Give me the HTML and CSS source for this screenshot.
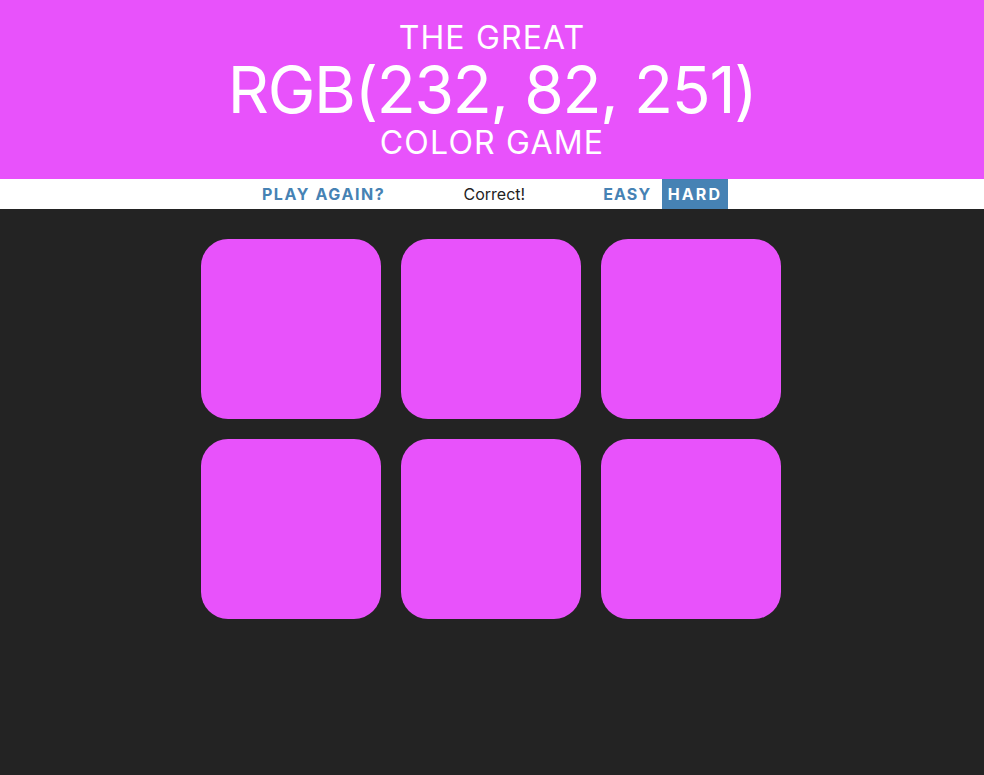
FILE: index.html
```html
<!DOCTYPE html>
<html>
<head>
<meta charset="utf-8">
<title>Color Game</title>
<link rel="stylesheet" href="styles.css">
</head>
<body>
<h1 class="title">
  <span class="title-line title-top">The Great</span>
  <span class="title-line color-display">RGB(232, 82, 251)</span>
  <span class="title-line title-bottom">Color Game</span>
</h1>
<div class="stripe">
  <button class="btn btn-reset">Play Again?</button>
  <span class="message">Correct!</span>
  <button class="btn btn-mode btn-easy">Easy</button>
  <button class="btn btn-mode btn-hard selected">Hard</button>
</div>
<div class="container">
  <div class="square"></div>
  <div class="square"></div>
  <div class="square"></div>
  <div class="square"></div>
  <div class="square"></div>
  <div class="square"></div>
</div>
</body>
</html>
```
FILE: styles.css
```css
body {
  margin: 0;
  background: #232323;
  font-family: Inter, "DejaVu Sans", sans-serif;
}

.title {
  margin: 0;
  padding: 20px 0 19px;
  height: 140px;
  background: rgb(232, 82, 251);
  color: #fff;
  text-align: center;
  text-transform: uppercase;
  font-weight: normal;
  font-size: 32px;
}

.title-line {
  display: block;
}

.title-top {
  height: 35px;
  line-height: 35px;
  letter-spacing: 1.15px;
}

.color-display {
  height: 70px;
  line-height: 70px;
  font-size: 64px;
  letter-spacing: -1.3px;
}

.title-bottom {
  height: 35px;
  line-height: 35px;
  letter-spacing: 1.2px;
}

.stripe {
  height: 30px;
  background: #fff;
  text-align: center;
  color: #232323;
  font-size: 16px;
}

.btn {
  border: none;
  background: none;
  padding: 0 6px;
  margin: 0;
  height: 100%;
  font-family: inherit;
  font-size: inherit;
  font-weight: 700;
  letter-spacing: 1.6px;
  text-transform: uppercase;
  color: steelblue;
  vertical-align: top;
  cursor: pointer;
}

.btn-easy {
  letter-spacing: 1.1px;
}

.btn-hard {
  letter-spacing: 2.1px;
}

.message {
  display: inline-block;
  width: 20%;
  line-height: 30px;
  vertical-align: top;
}

.btn.selected {
  background: steelblue;
  color: #fff;
}

.container {
  width: 580px;
  margin: 30px auto 0 calc(50% - 291px);
  display: grid;
  grid-template-columns: repeat(3, 180px);
  gap: 20px;
}

.square {
  height: 180px;
  border-radius: 15%;
  background: rgb(232, 82, 251);
}
```
